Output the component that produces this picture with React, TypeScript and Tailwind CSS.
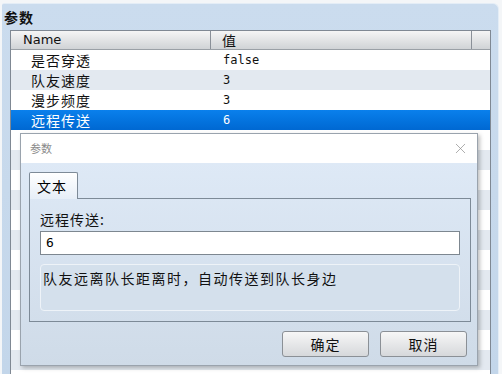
import { X } from 'lucide-react';

const cjk = '"Noto Sans CJK SC", "DejaVu Sans", sans-serif';
const mono = '"DejaVu Sans Mono", "Noto Sans CJK SC", monospace';

const rows = [
  { name: '是否穿透', value: 'false' },
  { name: '队友速度', value: '3' },
  { name: '漫步频度', value: '3' },
  { name: '远程传送', value: '6' },
];

const ParamDialog = () => (
  <div className="absolute left-[9px] top-[102px] w-[458px] h-[233px] border border-[#9aa3ad] bg-gradient-to-b from-[#e0ebf8] to-[#cfdbe8] shadow-[2px_2px_4px_rgba(0,0,0,0.25)] flex flex-col">
    {/* title bar */}
    <div className="h-[29px] bg-white flex items-center justify-between pl-[9px] pr-[8px]">
      <span className="text-[11px] text-[#8a8a8a]">参数</span>
      <X className="w-[17px] h-[17px] text-[#8c8c8c]" strokeWidth={1} />
    </div>

    <div className="px-[8px] pt-[9px]">
      {/* tab */}
      <div className="flex">
        <div className="w-[49px] h-[27px] border border-b-0 border-[#7d8a97] rounded-t-[2px] bg-gradient-to-b from-white to-[#e6eef7] flex items-center pl-[7px] text-[14px] tracking-[1px] text-black">
          文本
        </div>
      </div>
      {/* tab panel */}
      <div className="-mt-px w-[442px] h-[124px] border border-[#7d8a97] px-[10px] pt-[11px]">
        <div className="text-[14px] tracking-[1px] text-[#111] leading-[19px]">远程传送:</div>
        <div className="mt-[2px] h-[24px] border border-[#7d8790] bg-white flex items-center pl-[5px] text-[13px]" style={{ fontFamily: mono }}>
          6
        </div>
        <div className="mt-[9px] h-[47px] rounded-[4px] border border-[#eef3f8] bg-[#d4e0ec] pl-[2px] pt-[3px] text-[14px] tracking-[1.5px] text-[#111]">
          队友远离队长距离时，自动传送到队长身边
        </div>
      </div>
      {/* buttons */}
      <div className="flex justify-end gap-[11px] pr-[2px] mt-[9px]">
        <button className="w-[87px] h-[26px] rounded-[3px] border border-[#8b9096] bg-gradient-to-b from-[#f7f7f7] to-[#d6d8db] text-[14px] tracking-[1px] text-[#111]">确定</button>
        <button className="w-[87px] h-[26px] rounded-[3px] border border-[#8b9096] bg-gradient-to-b from-[#f7f7f7] to-[#d6d8db] text-[14px] tracking-[1px] text-[#111]">取消</button>
      </div>
    </div>
  </div>
);

export default function App() {
  const stripes = Array.from({ length: 12 });
  return (
    <div className="w-[502px] h-[374px] bg-[#f4f6f8] overflow-hidden" style={{ fontFamily: cjk }}>
      <div className="ml-[2px] mt-[3px] w-[497px] h-[371px] rounded-tr-[6px] rounded-tl-[2px] bg-gradient-to-b from-[#cbdcee] to-[#c3d6ea] border-t border-r border-[#e4edf6] pl-[8px]">
        <div className="h-[26px] -ml-[6px] flex items-center text-[14px] font-bold tracking-[1px] text-[#111]">参数</div>
        <div className="relative w-[481px] h-[400px] border border-[#7f8893] bg-white">
          {/* header */}
          <div className="flex h-[19px] bg-gradient-to-b from-[#f5f5f5] to-[#d0d3d6] border-b border-[#9aa0a6] text-[13px] text-[#111]">
            <div className="w-[200px] border-r border-[#8a9098] pl-[12px] leading-[18px]" style={{ fontFamily: '"DejaVu Sans", sans-serif' }}>Name</div>
            <div className="w-[261px] border-r border-[#8a9098] pl-[11px] leading-[19px] text-[14px]">值</div>
            <div className="flex-1" />
          </div>
          {/* rows */}
          {rows.map((r, i) => {
            const sel = i === 3;
            return (
              <div
                key={r.name}
                className={
                  sel
                    ? 'flex h-[20px] items-center bg-gradient-to-b from-[#0a80ec] to-[#0068d2] text-white'
                    : i % 2 === 1
                    ? 'flex h-[20px] items-center bg-[#e3e9f0] text-[#111]'
                    : 'flex h-[20px] items-center bg-white text-[#111]'
                }
              >
                <div className="w-[200px] pl-[20px] text-[14px] tracking-[1px]">{r.name}</div>
                <div className="pl-[12px] text-[12px]" style={{ fontFamily: mono }}>{r.value}</div>
              </div>
            );
          })}
          {stripes.map((_, i) => (
            <div key={i} className={i % 2 === 0 ? 'h-[20px] bg-white' : 'h-[20px] bg-[#e3e9f0]'} />
          ))}
          <ParamDialog />
        </div>
      </div>
    </div>
  );
}
